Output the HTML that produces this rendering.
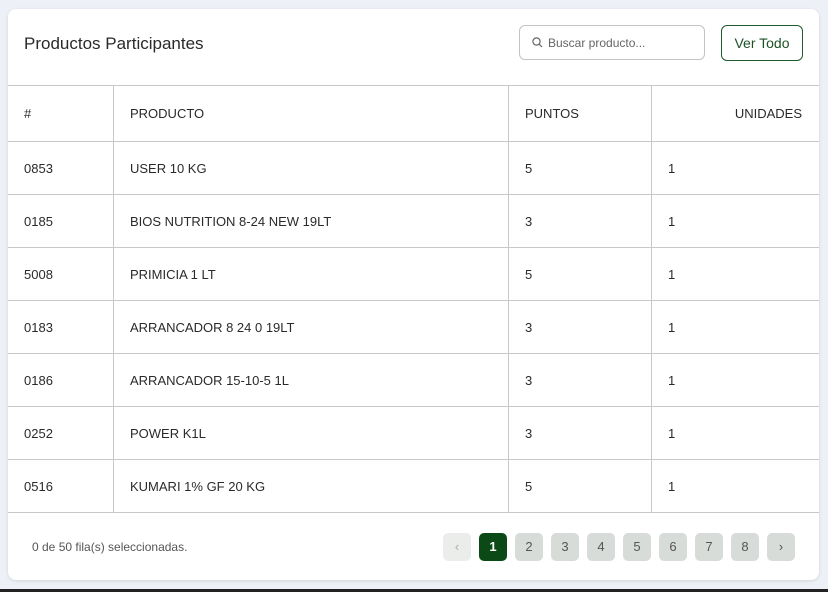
<!DOCTYPE html>
<html><head><style>
body{margin:0;width:828px;height:592px;background:#eef0f8;font-family:"Liberation Sans",sans-serif;position:relative;overflow:hidden}
.card{position:absolute;left:8px;top:9px;width:811px;height:571px;background:#fff;border-radius:8px;box-shadow:0 1px 3px rgba(0,0,0,.12);overflow:hidden}
.title{position:absolute;left:16px;top:25px;font-size:17px;color:#2a2a2a}
.search{position:absolute;left:511px;top:16px;width:186px;height:35px;border:1px solid #c4c4c4;border-radius:6px;box-sizing:border-box;font-size:12px;color:#666}
.search span{position:absolute;left:28px;top:10px}
.btn{position:absolute;left:713px;top:16px;width:82px;height:36px;border:1px solid #1f5a2a;border-radius:6px;box-sizing:border-box;color:#1b5224;font-size:14px;text-align:center;line-height:34px}
table{position:absolute;left:0;top:76px;border-collapse:collapse;width:811px;font-size:13px;color:#2a2a2a}
td,th{border:1px solid #c8c8c8;height:52px;padding:0 16px;text-align:left;font-weight:normal}
th{height:55px}
tr td:first-child,tr th:first-child{border-left:none}
tr td:last-child,tr th:last-child{border-right:none}
.foot{position:absolute;left:24px;top:531px;font-size:12px;color:#555}
.pg{position:absolute;top:524px;width:28px;height:28px;border-radius:5px;background:#d8dcd9;color:#555;font-size:13px;text-align:center;line-height:28px}
.bl{position:absolute;left:0;top:589px;width:828px;height:3px;background:#222}
</style></head><body>
<div class="card">
<div class="title">Productos Participantes</div>
<div class="search"><svg style="position:absolute;left:12px;top:11px" width="11" height="11" viewBox="0 0 11 11"><circle cx="4.5" cy="4.5" r="3.6" fill="none" stroke="#666" stroke-width="1.2"/><path d="M7.2 7.2L10 10" stroke="#666" stroke-width="1.2"/></svg><span>Buscar producto...</span></div>
<div class="btn">Ver Todo</div>
<table>
<tr><th style="width:73px">#</th><th style="width:362px">PRODUCTO</th><th style="width:110px">PUNTOS</th><th style="text-align:right;padding-right:17px">UNIDADES</th></tr>
<tr><td>0853</td><td>USER 10 KG</td><td>5</td><td>1</td></tr>
<tr><td>0185</td><td>BIOS NUTRITION 8-24 NEW 19LT</td><td>3</td><td>1</td></tr>
<tr><td>5008</td><td>PRIMICIA 1 LT</td><td>5</td><td>1</td></tr>
<tr><td>0183</td><td>ARRANCADOR 8 24 0 19LT</td><td>3</td><td>1</td></tr>
<tr><td>0186</td><td>ARRANCADOR 15-10-5 1L</td><td>3</td><td>1</td></tr>
<tr><td>0252</td><td>POWER K1L</td><td>3</td><td>1</td></tr>
<tr><td>0516</td><td>KUMARI 1% GF 20 KG</td><td>5</td><td>1</td></tr>
</table>
<div class="foot">0 de 50 fila(s) seleccionadas.</div>
<div class="pg" style="left:435px;background:#ebedeb;color:#aaa">‹</div>
<div class="pg" style="left:471px;background:#0b4a17;color:#fff;font-weight:bold">1</div>
<div class="pg" style="left:507px">2</div>
<div class="pg" style="left:543px">3</div>
<div class="pg" style="left:579px">4</div>
<div class="pg" style="left:615px">5</div>
<div class="pg" style="left:651px">6</div>
<div class="pg" style="left:687px">7</div>
<div class="pg" style="left:723px">8</div>
<div class="pg" style="left:759px">›</div>
</div>
<div class="bl"></div>
</body></html>
